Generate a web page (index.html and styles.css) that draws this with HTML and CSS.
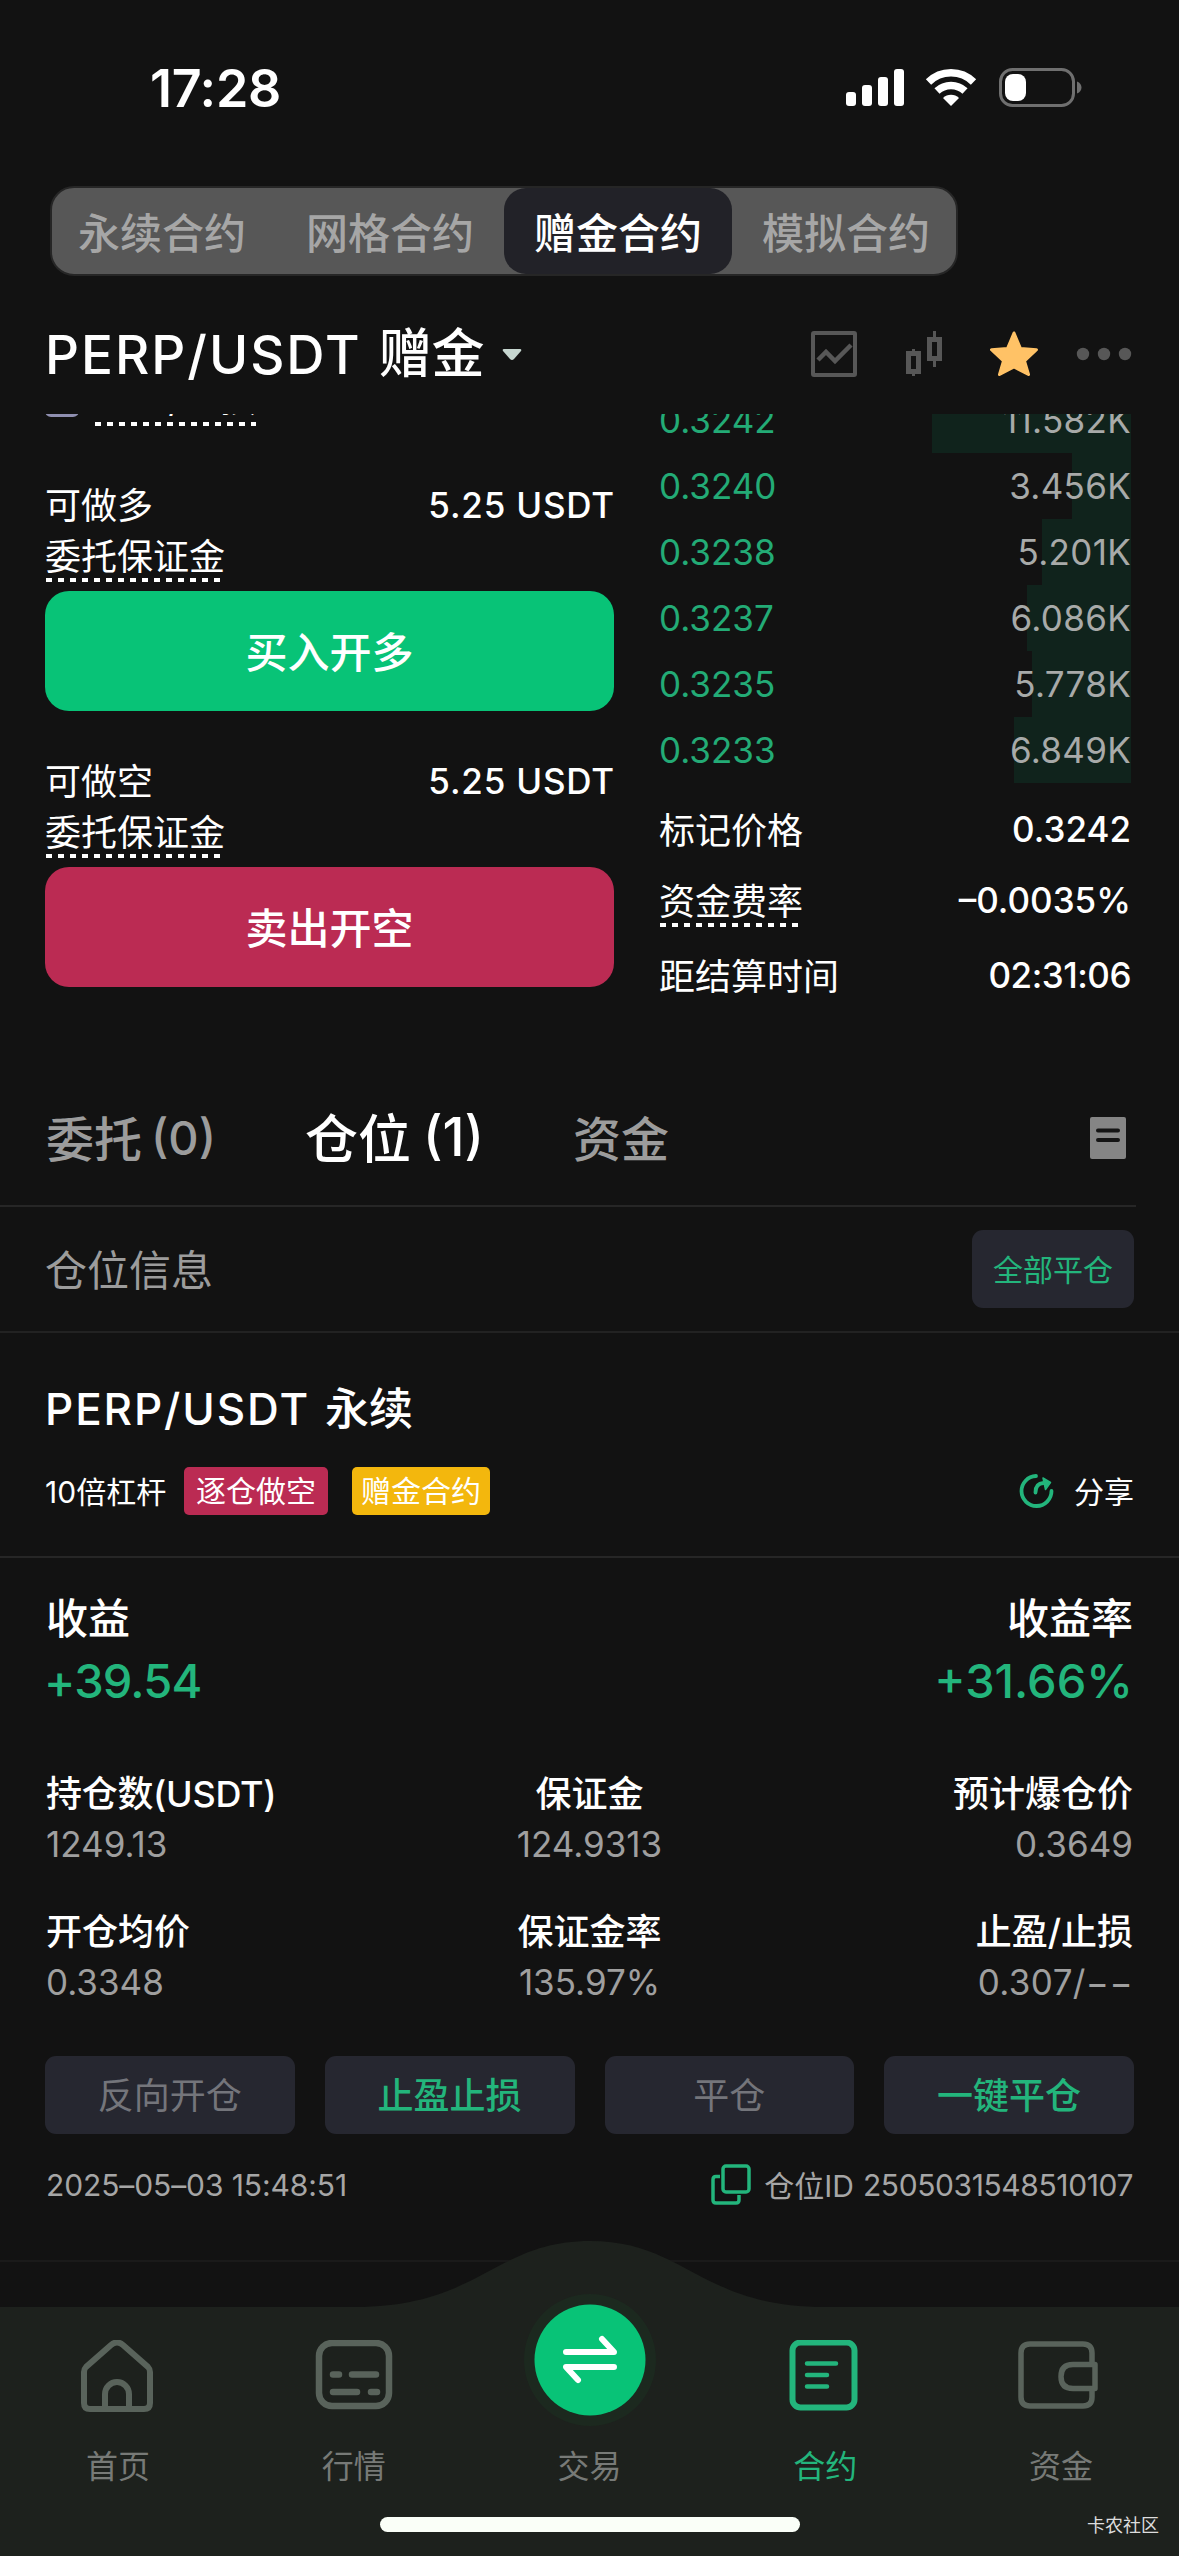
FILE: index.html
```html
<!DOCTYPE html>
<html lang="zh-CN">
<head>
<meta charset="utf-8">
<title>PERP/USDT 赠金合约</title>
<link rel="stylesheet" href="styles.css">
</head>
<body>
<div class="screen">
  <header class="status">
    <span class="clock">17:28</span>
    <svg class="status-icons" width="240" height="44" viewBox="0 0 240 44">
      <g fill="#fff">
        <rect x="0" y="24" width="10" height="14" rx="3"/>
        <rect x="16" y="17" width="10" height="21" rx="3"/>
        <rect x="32" y="9" width="10" height="29" rx="3"/>
        <rect x="48" y="1" width="10" height="37" rx="3"/>
      </g>
      <g fill="none" stroke="#fff" stroke-width="7.5">
        <path d="M82.500 14A32 32 0 0 1 127.500 14"/>
        <path d="M91 23A20.500 20.500 0 0 1 119 23"/>
      </g>
      <path d="M97 30a11.500 11.500 0 0 1 16 0L105 38z" fill="#fff"/>
      <rect x="154.500" y="1.500" width="73" height="36" rx="12" fill="none" stroke="#6f6f6f" stroke-width="3"/>
      <path d="M231 13.500c6 2 6 10 0 12z" fill="#6f6f6f"/>
      <rect x="159" y="6" width="21" height="27" rx="8" fill="#fff"/>
    </svg>
  </header>

  <nav class="segments">
    <span class="segment">永续合约</span>
    <span class="segment">网格合约</span>
    <span class="segment segment-active">赠金合约</span>
    <span class="segment">模拟合约</span>
  </nav>

  <div class="pair-bar">
    <h1 class="pair"><span class="pair-code">PERP/USDT</span><span class="pair-kind">赠金</span></h1>
    <svg class="caret" width="20" height="12" viewBox="0 0 20 12"><path d="M2 0h16q2 0 1 2l-7 8q-2 2-4 0L1 2Q0 0 2 0z" fill="#c6d6d0"/></svg>
    <svg class="pair-tools" width="322" height="48" viewBox="0 0 322 48">
      <g fill="none" stroke="#575757">
        <rect x="2" y="2" width="42" height="42" rx="1" stroke-width="4"/>
        <path d="M7 29l8-8 9 9 16-16" stroke-width="4.500"/>
        <rect x="97.500" y="22.500" width="10" height="18" stroke-width="5"/>
        <path d="M102.500 18v3M102.500 42v3M123.500 0v6M123.500 30v6" stroke-width="3"/>
        <rect x="118.500" y="8.500" width="10" height="19" stroke-width="5"/>
      </g>
      <path d="M203 2l6.500 15.500 16 1.200-12 11.300 4 13.500-14.500-7.500-14.500 7.500 4-13.500-12-11.300 16-1.200z" fill="#ffc266" stroke="#ffc266" stroke-width="3" stroke-linejoin="round"/>
      <g fill="#575757"><circle cx="272" cy="23" r="6.200"/><circle cx="293" cy="23" r="6.200"/><circle cx="314" cy="23" r="6.200"/></g>
    </svg>
  </div>

  <main class="trade">
    <section class="order">
      <div class="option"><i class="checkbox"></i><span class="option-name dashed">止盈/止损</span></div>
      <div class="limit"><span>可做多</span><b>5.25 USDT</b></div>
      <div class="margin-name"><span class="dashed">委托保证金</span></div>
      <button class="action buy">买入开多</button>
      <div class="limit limit-next"><span>可做空</span><b>5.25 USDT</b></div>
      <div class="margin-name"><span class="dashed">委托保证金</span></div>
      <button class="action sell">卖出开空</button>
    </section>
    <section class="book">
      <div class="bids">
        <div class="bid"><i class="depth" style="width:199px"></i><span>0.3242</span><em>11.582K</em></div>
        <div class="bid"><i class="depth" style="width:59px"></i><span>0.3240</span><em>3.456K</em></div>
        <div class="bid"><i class="depth" style="width:89px"></i><span>0.3238</span><em>5.201K</em></div>
        <div class="bid"><i class="depth" style="width:104px"></i><span>0.3237</span><em>6.086K</em></div>
        <div class="bid"><i class="depth" style="width:99px"></i><span>0.3235</span><em>5.778K</em></div>
        <div class="bid"><i class="depth" style="width:117px"></i><span>0.3233</span><em>6.849K</em></div>
      </div>
      <div class="facts">
        <div class="fact"><span>标记价格</span><b>0.3242</b></div>
        <div class="fact"><span class="dashed">资金费率</span><b>–0.0035%</b></div>
        <div class="fact"><span>距结算时间</span><b class="countdown">02:31:06</b></div>
      </div>
    </section>
  </main>

  <nav class="tabs">
    <span class="tab">委托<small>(0)</small></span>
    <span class="tab tab-active">仓位<small>(1)</small></span>
    <span class="tab">资金</span>
    <svg class="records" width="36" height="42" viewBox="0 0 36 42"><rect width="36" height="42" rx="2" fill="#858585"/><path d="M8 13.500h20M8 23h20" stroke="#141414" stroke-width="4" stroke-linecap="round"/></svg>
  </nav>

  <div class="summary">
    <span>仓位信息</span>
    <button class="close-all">全部平仓</button>
  </div>

  <section class="position-head">
    <h2 class="position-name"><span class="position-code">PERP/USDT</span><span>永续</span></h2>
    <div class="tags">
      <span class="leverage">10倍杠杆</span>
      <span class="tag tag-short">逐仓做空</span>
      <span class="tag tag-bonus">赠金合约</span>
      <svg class="share-icon" width="36" height="36" viewBox="0 0 36 36">
        <g fill="none" stroke="#23b57c" stroke-width="3.800" stroke-linecap="round"><path d="M17 3A15 15 0 1 0 32.500 18"/><path d="M16.500 19.500q0-9 8-9.500"/></g>
        <path d="M24 5l7.500 4.500-5 7z" fill="#23b57c" stroke="#23b57c" stroke-width="1.500" stroke-linejoin="round"/>
      </svg>
      <span class="share">分享</span>
    </div>
  </section>

  <section class="profit">
    <div><span>收益</span><b class="gain">+39.54</b></div>
    <div class="to-end"><span>收益率</span><b>+31.66%</b></div>
  </section>

  <section class="stats">
    <div><span class="size-name">持仓数(USDT)</span><em>1249.13</em></div>
    <div class="to-center"><span>保证金</span><em>124.9313</em></div>
    <div class="to-end"><span>预计爆仓价</span><em>0.3649</em></div>
    <div><span>开仓均价</span><em>0.3348</em></div>
    <div class="to-center"><span>保证金率</span><em>135.97%</em></div>
    <div class="to-end"><span>止盈/止损</span><em class="targets">0.307/−−</em></div>
  </section>

  <div class="controls">
    <button class="control">反向开仓</button>
    <button class="control control-on">止盈止损</button>
    <button class="control">平仓</button>
    <button class="control control-on">一键平仓</button>
  </div>

  <footer class="meta">
    <span class="date">2025–05–03 15:48:51</span>
    <svg class="copy" width="40" height="42" viewBox="0 0 40 42" fill="none" stroke="#23b57c" stroke-width="3.500"><rect x="12" y="2" width="26" height="26" rx="3"/><path d="M9 12.500H5q-3 0-3 3V36q0 3 3 3h20q3 0 3-3v-5"/></svg>
    <span class="id-name">仓位ID</span><span class="id-value">2505031548510107</span>
  </footer>

  <nav class="dock">
    <svg class="dock-shape" width="1179" height="316" viewBox="0 0 1179 316"><path d="M0 67H355C480 67 495 1 590 1S700 67 825 67H1179V316H0z" fill="#1d211d"/></svg>
    <a class="dock-item">
      <svg width="80" height="76" viewBox="0 0 80 76" fill="none" stroke="#59635b" stroke-width="6"><path d="M6 32q0-3 2-5L33 5q6-5 12 0L70 27q2 2 2 5V63q0 6-6 6H12q-6 0-6-6z"/><path d="M27 69V54a12 12 0 0 1 24 0V69"/></svg>
      <span>首页</span>
    </a>
    <a class="dock-item">
      <svg width="80" height="76" viewBox="0 0 80 76" fill="none" stroke="#59635b" stroke-width="6.500"><rect x="5" y="3" width="70" height="63" rx="13"/><path d="M19 34.500h6M38 34.500h24M19 52h24M57 52h6" stroke-linecap="round"/></svg>
      <span>行情</span>
    </a>
    <a class="dock-item">
      <svg class="swap" width="140" height="140" viewBox="0 0 140 140"><circle cx="71" cy="70" r="66" fill="#1c291f"/><circle cx="71" cy="70" r="55.500" fill="#08c377"/><path d="M47 62H95L83 49M95 77H47L59 90" fill="none" stroke="#fff" stroke-width="6" stroke-linecap="round" stroke-linejoin="round"/></svg>
      <span>交易</span>
    </a>
    <a class="dock-item dock-item-active">
      <svg width="80" height="76" viewBox="0 0 80 76" fill="none" stroke="#23b57c" stroke-width="6"><rect x="7.500" y="2.500" width="62" height="65" rx="8"/><path d="M22 23.500h29M22 35h20M22 46.500h20" stroke-width="4.500" stroke-linecap="round"/></svg>
      <span>合约</span>
    </a>
    <a class="dock-item">
      <svg width="80" height="76" viewBox="0 0 80 76" fill="none" stroke="#59635b" stroke-width="5.500" overflow="visible"><path d="M71 24V13q0-9-9-9H9Q0 4 0 13V57q0 9 9 9H62q9 0 9-9V48"/><path d="M74 24.500H52q-12 0-12 12t12 12H74z" stroke-linejoin="round"/></svg>
      <span>资金</span>
    </a>
    <i class="home-bar"></i>
    <span class="watermark">卡农社区</span>
  </nav>
</div>
</body>
</html>
```

FILE: styles.css
```css
* { box-sizing: border-box; margin: 0; padding: 0; }
body { background: #121212; color: #fff; font-family: Inter, "Noto Sans CJK SC", sans-serif; }
button { border: 0; color: inherit; font: inherit; }
em, i { font-style: normal; }
svg { display: block; flex: none; }
b, h1, h2 { font-weight: 500; }
.screen { position: relative; width: 1179px; height: 2556px; overflow: hidden; background: #121212; white-space: nowrap; }

.status { display: flex; justify-content: space-between; align-items: center; height: 186px; padding: 0 93px 8px 150px; }
.clock { font-size: 52px; font-weight: 600; line-height: 60px; letter-spacing: -0.3px; }
.status-icons { margin-top: 2px; }

.segments { display: flex; justify-content: center; width: 908px; height: 90px; margin-left: 50px; padding: 2px 0; border: 2px solid #262626; border-radius: 24px; background: #575757; overflow: hidden; }
.segment { flex: 0 0 228px; display: flex; align-items: center; justify-content: center; padding-bottom: 2px; font-size: 42px; font-weight: 500; color: #a6a6a6; }
.segment-active { margin: -2px 0; border-radius: 22px; background: #222228; color: #fff; }

.pair-bar { display: flex; align-items: center; height: 138px; padding: 20px 46px 0 45px; }
.pair { display: flex; gap: 17px; font-size: 53px; line-height: 70px; }
.pair-code { letter-spacing: 2px; }
.pair-kind { margin-top: -1px; }
.caret { margin-left: 17px; }
.pair-tools { margin-left: auto; }

.trade { display: flex; justify-content: space-between; height: 636px; padding: 0 48px 0 45px; overflow: hidden; }
.order { width: 569px; }
.dashed { position: relative; }
.dashed::after { content: ""; position: absolute; left: 1px; right: 2px; bottom: -5px; height: 4px; background: repeating-linear-gradient(90deg, #fff 0 6px, transparent 6px 12px); }
.option { display: flex; gap: 15px; height: 50px; margin-top: -37px; align-items: flex-start; }
.checkbox { width: 34px; height: 34px; margin-top: 6px; border: 3px solid #8f8fb0; border-radius: 6px; }
.option-name { font-size: 35px; line-height: 44px; letter-spacing: 2.2px; }
.limit { display: flex; justify-content: space-between; align-items: center; height: 52px; margin-top: 52px; font-size: 36px; }
.limit span { margin-top: -4px; }
.limit b { font-size: 35px; letter-spacing: 0.8px; margin-right: -1px; }
.limit-next { margin-top: 44px; }
.margin-name { height: 60px; font-size: 36px; line-height: 52px; }
.margin-name .dashed { display: inline-block; }
.margin-name .dashed::after { bottom: 1px; }
.action { display: block; width: 569px; height: 120px; padding-bottom: 3px; border-radius: 24px; font-size: 42px; font-weight: 500; }
.buy { background: #08c377; }
.sell { background: #bb2b53; }

.book { width: 471px; }
.bids { width: 471px; margin-top: -27px; }
.bid { position: relative; display: flex; justify-content: space-between; align-items: center; height: 66px; font-size: 35px; color: #23ab76; }
.bid span, .bid em { position: relative; left: -1px; }
.bid em { left: 0; color: #a8aaa9; letter-spacing: 0.3px; }
.depth { position: absolute; right: 0; top: 0; height: 100%; background: #10231c; }
.facts { display: grid; grid-template-rows: 73px 70px 79px; margin-top: 9px; }
.fact { display: flex; justify-content: space-between; align-items: center; font-size: 36px; }
.fact span { margin: -2px 0 0 -1px; }
.fact .dashed::after { bottom: -2px; }
.fact b { font-size: 35px; }
.fact .countdown { letter-spacing: -0.5px; }

.tabs { display: flex; align-items: center; width: 1136px; height: 157px; padding: 20px 10px 0 46px; border-bottom: 2px solid #262626; color: #9c9c9c; }
.tab { display: flex; align-items: center; margin: -3px 89px 0 0; font-size: 48px; font-weight: 500; }
.tab small { margin: 2px 0 0 9px; font-size: 47px; }
.tab-active { font-size: 53px; color: #fff; }
.tab-active small { font-size: 53px; margin-left: 12px; }
.records { margin-left: auto; }

.summary { display: flex; align-items: center; justify-content: space-between; height: 126px; padding: 0 45px; border-bottom: 2px solid #222; font-size: 42px; color: #9c9c9c; }
.summary span { margin-top: -3px; }
.close-all { width: 162px; height: 78px; padding-bottom: 2px; border-radius: 11px; background: #262730; color: #23b57c; font-size: 30px; }

.position-head { height: 225px; padding: 50px 45px 0; border-bottom: 2px solid #262626; }
.position-name { display: flex; gap: 15px; font-size: 44px; line-height: 52px; }
.position-code { letter-spacing: 1.9px; }
.tags { display: flex; align-items: center; height: 48px; margin-top: 32px; font-size: 30px; }
.leverage { width: 139px; margin-top: -2px; }
.tag { width: 144px; height: 48px; border-radius: 5px; line-height: 48px; text-align: center; }
.tag-short { background: #bb2b53; }
.tag-bonus { width: 138px; margin-left: 24px; background: #f3b70d; }
.share-icon { margin-left: auto; }
.share { margin: -2px 0 0 19px; }

.to-end { text-align: right; }
.to-center { text-align: center; }
.profit { display: flex; justify-content: space-between; height: 209px; padding: 30px 46px 0; font-size: 42px; line-height: 62px; }
.profit span, .profit b, .stats span, .stats em { display: block; }
.profit span { font-weight: 500; }
.profit b { color: #23b57c; font-size: 47px; line-height: 62px; }
.profit .gain { margin-left: -2px; letter-spacing: -0.8px; }
.stats { display: grid; grid-template-columns: 1fr 1fr 1fr; grid-auto-rows: 138px; height: 289px; padding: 0 46px; font-size: 36px; line-height: 54px; }
.stats span { font-weight: 500; }
.stats .size-name { letter-spacing: -0.3px; }
.stats em { color: #9f9f9f; font-size: 35px; line-height: 46px; }
.stats .targets { letter-spacing: 0.4px; }

.controls { display: flex; gap: 30px; padding: 0 45px; }
.control { flex: 1; height: 78px; padding-bottom: 5px; border-radius: 11px; background: #262730; color: #74757b; font-size: 36px; }
.control-on { color: #23b57c; font-weight: 500; }

.meta { display: flex; align-items: center; height: 128px; padding: 0 46px 24px; border-bottom: 2px solid #1a1a1a; color: #a6a6a6; font-size: 30px; }
.date { letter-spacing: -0.1px; }
.copy { margin-left: auto; margin-right: 13px; }
.id-name { margin-top: -2px; }
.id-value { margin-left: 9px; letter-spacing: -0.4px; }

.dock { position: absolute; left: 0; right: 0; bottom: 0; height: 316px; display: grid; grid-template-columns: repeat(5, 1fr); color: #777a77; }
.dock-shape { position: absolute; inset: 0; }
.dock-item { position: relative; display: flex; flex-direction: column; align-items: center; padding-top: 100px; font-size: 32px; }
.dock-item span { line-height: 48px; margin-top: 27px; }
.dock-item .swap { margin: -50px 0 -14px; }
.dock-item-active { color: #23b57c; }
.home-bar { position: absolute; left: 380px; bottom: 24px; width: 420px; height: 15px; border-radius: 8px; background: #fafff8; }
.watermark { position: absolute; right: 20px; bottom: 17px; font-size: 18px; line-height: 26px; color: #ddd; }
```
